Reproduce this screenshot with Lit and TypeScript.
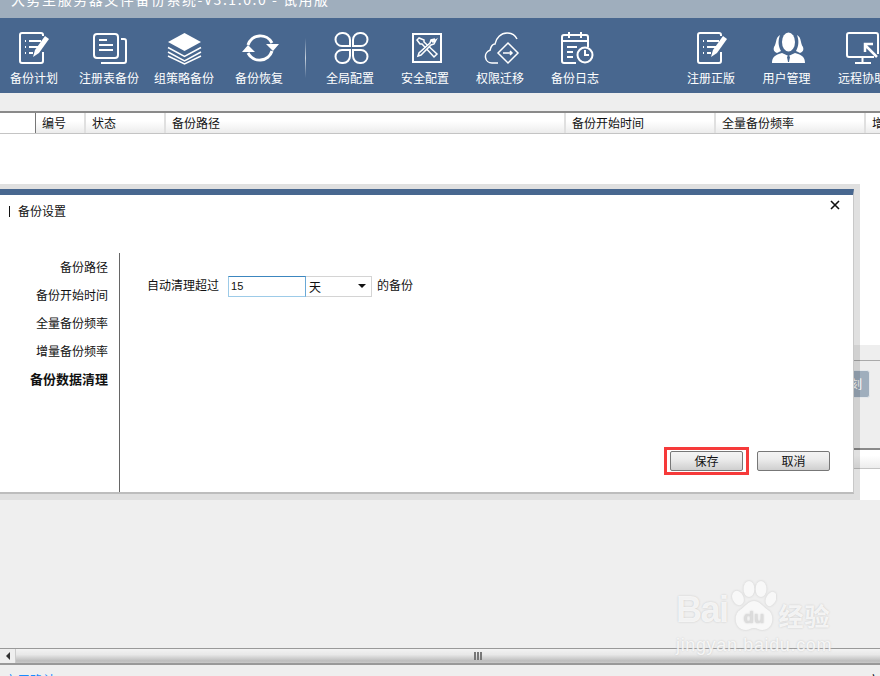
import { LitElement, html, css, svg } from "lit";
import { customElement } from "lit/decorators.js";

const S = (inner: unknown) => html`<svg class="ic" viewBox="0 0 36 36" width="36" height="36" fill="none" stroke="#fff" stroke-width="2" overflow="visible">${inner}</svg>`;

const listPen = svg`
  <path d="M27 6V5a2 2 0 0 0-2-2H6a2 2 0 0 0-2 2v26a2 2 0 0 0 2 2h19a2 2 0 0 0 2-2v-9" stroke-width="2"/>
  <path d="M9 11h1M13 11h12M9 17h1M13 17h9M9 23h1M13 23h4" stroke-width="2"/>
  <path d="M29 6l4 3-10 14-6 4 2-7z" fill="#fff" stroke="none"/>`;

const icons = {
  plan: S(listPen),
  reg: S(svg`
    <rect x="3" y="4" width="24" height="24" rx="3"/>
    <path d="M30 9h3a2 2 0 0 1 2 2v20a2 2 0 0 1-2 2H10"/>
    <path d="M8 10h8M8 15h14M8 20h14"/>`),
  layers: S(svg`
    <path d="M18.500 3L35 12 18.500 21 2 12z" fill="#fff" stroke="none"/>
    <path d="M2 17.500l16.500 9 16.500-9M2 22l16.500 9 16.500-9M2 26l16.500 8 16.500-8" stroke-width="1.500"/>`),
  restore: S(svg`
    <path d="M7 15A13 13 0 0 1 31 13" stroke-width="3"/>
    <path d="M31 21A13 13 0 0 1 7 23" stroke-width="3"/>
    <path d="M25 14h13l-6 7zM1 22h13l-7-7z" fill="#fff" stroke="none"/>`),
  global: S(svg`
    <path d="M18 16H10a6.500 6.500 0 0 1 0-13h1a7 7 0 0 1 7 7z"/>
    <path d="M21 16h8a6.500 6.500 0 0 0 0-13h-1a7 7 0 0 0-7 7z"/>
    <path d="M18 20H10a6.500 6.500 0 0 0 0 13h1a7 7 0 0 0 7-7z"/>
    <path d="M21 20h8a6.500 6.500 0 0 1 0 13h-1a7 7 0 0 1-7-7z"/>`),
  safe: S(svg`
    <rect x="6" y="4" width="28" height="28"/>
    <path d="M12 8l-2 2 3 4 2 0 12 13 3-3-13-12 0-2z" stroke-width="1.500"/>
    <path d="M28 9l-4 1-1 3-11 10-1 3 3-1 10-10 3-1 2-4-3 2-1-1z" fill="#48678f" stroke-width="1.500"/>`),
  move: S(svg`
    <path d="M16 33H10a6.500 6.500 0 0 1-2-12.700C9 16 11 14 13 14C14 8 19 3 25 3C29 3 33 5 35 9" stroke-width="1.500"/>
    <path d="M26 13L36 23 26 33 16 23z" stroke-width="1.500"/>
    <path d="M21 23h9M28 21l2 2-2 2" stroke-width="1.500"/>`),
  log: S(svg`<g transform="translate(2 0)">
    <path d="M17 33H5a2 2 0 0 1-2-2V7a2 2 0 0 1 2-2h22a2 2 0 0 1 2 2v10"/>
    <path d="M10 2v6M22 2v6M3 11h26M8 17h10M8 22h6M8 27h6"/>
    <circle cx="26" cy="25" r="7.500"/>
    <path d="M26 20v5h4"/></g>`),
  license: S(svg`<g transform="translate(1 0)">${listPen}</g>`),
  user: S(svg`
    <ellipse cx="19.500" cy="12" rx="6.500" ry="9.500" fill="#fff" stroke="none"/>
    <path d="M11 5C6 8 8 13 5 17C4 20 5 22 8 23L12 21C9 16 9 10 11 5z" fill="#fff" stroke="none"/>
    <path d="M28 5C33 8 31 13 34 17C35 20 34 22 31 23L27 21C30 16 30 10 28 5z" fill="#fff" stroke="none"/>
    <path d="M3 33C3 27 6 25 13 23L19.500 26 26 23C33 25 36 27 36 33z" fill="#fff" stroke="none"/>
    <path d="M19.500 25l-1.500 2 1 5h1l1-5z" fill="#48678f" stroke="none"/>`),
  remote: S(svg`
    <path d="M30 27H5a2 2 0 0 1-2-2V5a2 2 0 0 1 2-2h27a2 2 0 0 1 2 2v19"/>
    <path d="M18.500 27v6M11 33h16"/>
    <path d="M33 27L21 15M21 22v-8h8" stroke-width="2.500"/>`),
};

const tools1 = [["备份计划", icons.plan], ["注册表备份", icons.reg], ["组策略备份", icons.layers], ["备份恢复", icons.restore]];
const tools2 = [["全局配置", icons.global], ["安全配置", icons.safe], ["权限迁移", icons.move], ["备份日志", icons.log]];
const tools3 = [["注册正版", icons.license], ["用户管理", icons.user], ["远程协助", icons.remote]];

const cols = [["编号", 50], ["状态", 80], ["备份路径", 400], ["备份开始时间", 150], ["全量备份频率", 150], ["增量备份频率", 150]];
const side = ["备份路径", "备份开始时间", "全量备份频率", "增量备份频率", "备份数据清理"];

@customElement("app-root")
export class AppRoot extends LitElement {
  static styles = css`
    :host { display: block; width: 880px; height: 676px; position: relative; overflow: hidden; background: #eeeeee;
      font: 12px "Noto Sans CJK SC", "Liberation Sans", sans-serif; color: #111; }
    .page { display: flex; flex-direction: column; height: 100%; }
    .title { flex: 0 0 18px; background: #9faebd; color: #fff; font-size: 14px; line-height: 16px; overflow: hidden;
      padding-left: 11px; letter-spacing: 1.550px; white-space: nowrap; }
    .title span { display: block; margin-top: -9px; }
    .toolbar { flex: 0 0 75px; background: #48678f; display: flex; color: #fff; overflow: hidden; }
    .group { display: flex; gap: 7px; }
    .g2 { margin-left: 10px; }
    .g3 { margin-left: 68px; gap: 7.500px; }
    .tool { flex: 0 0 68px; display: flex; flex-direction: column; align-items: center; padding-top: 12px; white-space: nowrap; }
    .ic { display: block; }
    .tool label { margin-top: 5px; line-height: 14px; }
    .sep { flex: 0 0 1px; width: 1px; height: 40px; margin: 20px 0 0 12px; background: linear-gradient(#48678f, #c9d3de 50%, #48678f); }
    .gap { flex: 0 0 18px; }
    .thead { flex: 0 0 23px; box-sizing: border-box; display: flex; overflow: hidden; background: linear-gradient(#fff 40%, #ececec);
      border-top: 2px solid #8a8a8a; border-bottom: 1px solid #c4c4c4; }
    .corner { flex: 0 0 35px; border-right: 1px solid #777; background: #fff; }
    .th { flex: none; box-sizing: border-box; padding-left: 6px; line-height: 20px; border-right: 2px solid #e0e0e0; white-space: nowrap; }
    .tbody { flex: 0 0 211px; background: #fff; }
    .panel { flex: 0 0 103px; background: #eee; box-sizing: border-box; padding-top: 15px; }
    .prow { height: 100%; box-sizing: border-box; border-top: 1px solid #aaa; padding-right: 10px; display: flex; justify-content: flex-end; }
    .pbtn { width: 60px; height: 28px; margin-top: 9px; box-sizing: border-box; background: #9faebd; border: 1px solid #e4e8ec; border-radius: 3px; color: #fff; text-align: right; padding-right: 7px; line-height: 26px; font-size: 12px; }
    .lower { flex: 0 0 52px; background: #fff; border-top: 2px solid #8a8a8a; box-sizing: border-box; }
    .lowerhead { height: 18px; background: linear-gradient(#fff 30%, #ececec); border-bottom: 1px solid #c4c4c4; }
    .rest { flex: 1 1 auto; background: #efefef; }
    .hscroll { flex: 0 0 17px; box-sizing: border-box; border-top: 1px solid #999; border-bottom: 2px solid #999; display: flex; background: #efefef; }
    .arrow { flex: 0 0 15px; display: flex; align-items: center; justify-content: center; border-right: 1px solid #ccc; }
    .tri { width: 0; height: 0; border: 4px solid transparent; border-right: 4px solid #333; border-left: 0; }
    .thumb { flex: 1; display: flex; align-items: center; justify-content: center; gap: 1px; background: linear-gradient(#f3f3f3, #e8e8e8 40%, #bdbdbd 85%, #c9c9c9); padding-left: 59px; }
    .thumb i { width: 2px; height: 8px; background: #777; }
    .status { flex: 0 0 11px; box-sizing: border-box; background: #efefef; color: #1a8cff; overflow: hidden; display: flex; justify-content: space-between; padding: 7px 0 0 4px; line-height: 16px; font-size: 13px; }
    .status b { font-weight: 400; color: #111; }

    .shade { position: absolute; left: -10px; top: 184px; width: 870px; height: 316px; box-sizing: border-box; background: rgba(0,0,0,.12); padding: 5px 6px 6px 0; }
    .modal { height: 100%; box-sizing: border-box; background: #fff; border-top: 6px solid #48678f; border-bottom: 2px solid #bdbdbd; border-right: 1px solid #c8c8c8; display: flex; flex-direction: column; position: relative; }
    .mhead { flex: 0 0 58px; box-sizing: border-box; padding: 7px 0 0 19px; line-height: 18px; display: flex; gap: 8px; font-size: 12px; }
    .mhead i { width: 1px; height: 11px; margin-top: 4px; background: #111; }
    .close { position: absolute; right: 11px; top: 3px; width: 14px; height: 14px; }
    .mbody { flex: 1; display: flex; min-height: 0; }
    .side { flex: 0 0 130px; box-sizing: border-box; border-right: 1px solid #666; padding: 0 11px 0 0; text-align: right; display: flex; flex-direction: column; }
    .side div { height: 28px; line-height: 28px; white-space: nowrap; }
    .side .on { font-weight: 700; font-size: 13px; }
    .form { flex: 1; display: flex; flex-direction: column; padding: 22px 23px 21px 27px; }
    .line { display: flex; align-items: center; height: 22px; }
    .line > span { line-height: 20px; margin-top: -2px; }
    .input { width: 78px; height: 21px; box-sizing: border-box; margin-left: 9px; border: 1px solid #9dcbe8; border-top-color: #3c86bf; border-right-color: #6aa9d6; padding-left: 2px; font: 11px "Liberation Sans", sans-serif; display: flex; align-items: center; }
    .select { width: 66px; height: 21px; box-sizing: border-box; border: 1px solid #d4d4d4; border-left: 0; display: flex; align-items: center; justify-content: space-between; padding: 0 5px 0 3px; }
    .caret { width: 0; height: 0; border: 4px solid transparent; border-top: 4px solid #111; border-bottom: 0; }
    .line > .after { margin-left: 5px; }
    .btns { margin-top: auto; display: flex; justify-content: flex-end; gap: 14px; }
    .btn { position: relative; width: 73px; height: 20px; box-sizing: border-box; border: 1px solid #777; border-radius: 2px; background: linear-gradient(#f4f4f4, #ececec 40%, #cfcfcf); text-align: center; line-height: 18px; }
    .btn.hl::after { content: ""; position: absolute; left: -7px; top: -5px; width: 79px; height: 22px; border: 3px solid #f63a3a; }

    .wm { position: absolute; left: 676px; top: 581px; width: 160px; color: rgba(255,255,255,.8); text-shadow: 0 0 2px #c4c4c4; pointer-events: none; }
    .wm-top { display: flex; align-items: flex-end; height: 51px; }
    .wm-bai { font: 700 36px "Liberation Sans", sans-serif; line-height: 44px; letter-spacing: -1.500px; }
    .wm-cn { font: 700 25px "Noto Sans CJK SC", sans-serif; line-height: 34px; margin-left: 3px; white-space: nowrap; letter-spacing: 1px; }
    .paw { width: 45px; height: 51px; margin-left: 3px; flex: none; filter: drop-shadow(0 0 1px #ccc); }
    .wm-url { font: 18px "Liberation Sans", sans-serif; letter-spacing: .65px; margin-top: 3px; white-space: nowrap; line-height: 20px; }
  `;

  private tool(t: unknown[]) {
    return html`<div class="tool">${t[1]}<label>${t[0]}</label></div>`;
  }

  render() {
    return html`
      <div class="page">
        <div class="title"><span>大势至服务器文件备份系统-V3.1.0.0 - 试用版</span></div>
        <div class="toolbar">
          <div class="group">${tools1.map((t) => this.tool(t))}</div>
          <div class="sep"></div>
          <div class="group g2">${tools2.map((t) => this.tool(t))}</div>
          <div class="group g3">${tools3.map((t) => this.tool(t))}</div>
        </div>
        <div class="gap"></div>
        <div class="thead">
          <div class="corner"></div>
          ${cols.map((c) => html`<div class="th" style="flex-basis:${c[1]}px">${c[0]}</div>`)}
        </div>
        <div class="tbody"></div>
        <div class="panel"><div class="prow"><div class="pbtn">刻</div></div></div>
        <div class="lower"><div class="lowerhead"></div></div>
        <div class="rest"></div>
        <div class="hscroll">
          <div class="arrow"><div class="tri"></div></div>
          <div class="thumb"><i></i><i></i><i></i></div>
        </div>
        <div class="status"><span>启用确认</span><b>审</b></div>
      </div>

      <div class="shade">
        <div class="modal">
          <div class="mhead"><i></i><span>备份设置</span></div>
          <svg class="close" viewBox="0 0 14 14" fill="none" stroke="#111" stroke-width="1.600"><path d="M3 3l8 8M11 3l-8 8"/></svg>
          <div class="mbody">
            <div class="side">
              ${side.map((s, i) => html`<div class=${i === 4 ? "on" : ""}>${s}</div>`)}
            </div>
            <div class="form">
              <div class="line">
                <span>自动清理超过</span>
                <div class="input">15</div>
                <div class="select"><span>天</span><div class="caret"></div></div>
                <span class="after">的备份</span>
              </div>
              <div class="btns">
                <div class="btn hl">保存</div>
                <div class="btn">取消</div>
              </div>
            </div>
          </div>
        </div>
      </div>

      <div class="wm">
        <div class="wm-top">
          <span class="wm-bai">Bai</span>
          <svg class="paw" viewBox="0 0 45 51" fill="#f8f8f8">
            <ellipse cx="7" cy="17" rx="5.500" ry="7.500" transform="rotate(-25 7 17)"/>
            <ellipse cx="18" cy="8" rx="5.500" ry="8"/>
            <ellipse cx="30" cy="8" rx="5.500" ry="8"/>
            <ellipse cx="40" cy="18" rx="5" ry="7.500" transform="rotate(25 40 18)"/>
            <path d="M23 20c6 0 9 6 14 9 7 4 6 20-6 20-3 0-5-2-8-2s-5 2-8 2C3 49 2 33 9 29c5-3 8-9 14-9z"/>
            <text x="23" y="42" text-anchor="middle" font-family="Liberation Sans" font-size="17" font-weight="700" fill="#dcdcdc">du</text>
          </svg>
          <span class="wm-cn">经验</span>
        </div>
        <div class="wm-url">jingyan.baidu.com</div>
      </div>
    `;
  }
}
